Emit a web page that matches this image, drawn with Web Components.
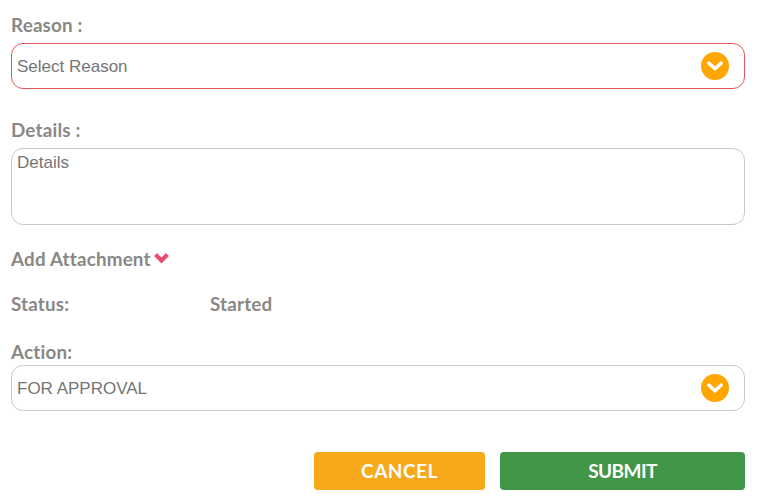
<!DOCTYPE html>
<html><head><meta charset="utf-8">
<style>
html,body{margin:0;padding:0;background:#fff}
body{width:764px;height:502px;overflow:hidden}
</style></head><body>
<request-form></request-form>
<template id="t-label"><style>
:host{display:block;font:700 18.8px/20px Lato,sans-serif;letter-spacing:.2px;color:#8a8884}
</style><slot></slot></template>
<template id="t-select"><style>
:host{display:flex;align-items:center;justify-content:space-between;box-sizing:border-box;height:46px;border:1px solid #c9c9c9;border-radius:12px;padding:1px 15px 0 5px;font:17px "Liberation Sans",Arial,sans-serif;color:#757575;background:#fff}
:host([invalid]){border-color:#e25555}
.c{width:28px;height:28px;flex:none;display:block;margin-top:-2px}
</style><slot></slot><svg class="c" viewBox="0 0 28 28"><circle cx="14" cy="14" r="14" fill="#ffa600"/><path d="M8 11.2 14 16.8l6-5.6" fill="none" stroke="#fff" stroke-width="3.6" stroke-linecap="round" stroke-linejoin="round"/></svg></template>
<template id="t-area"><style>
:host{display:block;box-sizing:border-box;height:77px;border:1px solid #c9c9c9;border-radius:12px;padding:4px 5px;font:17px/19px "Liberation Sans",Arial,sans-serif;color:#757575;background:#fff}
</style><slot></slot></template>
<template id="t-btn"><style>
:host{display:flex;align-items:center;justify-content:center;height:38px;border-radius:4px;font:700 19px/38px Lato,sans-serif;color:#fff;background:var(--bg);letter-spacing:var(--ls,0)}
</style><slot></slot></template>
<template id="t-form"><style>
:host{display:flex;flex-direction:column;box-sizing:border-box;width:764px;height:502px;padding:15px 19px 0 11px}
form-select{margin-top:8px}
.details{margin-top:31px}
form-area{margin-top:8px}
.add{display:flex;align-items:center;gap:2px;margin-top:24px}
.add svg{width:17px;height:12px;display:block;margin-top:-3px}
.status{display:flex;margin-top:25px}
.status form-label:first-child{width:199px}
.action{margin-top:28px}
.action + form-select{margin-top:3px}
.btns{display:flex;justify-content:flex-end;gap:15px;margin-top:41px}
.cancel{width:171px;--bg:#f7a81b;--ls:.5px}
.submit{width:245px;--bg:#429648;--ls:-.6px}
</style>
<form-label>Reason :</form-label>
<form-select invalid>Select Reason</form-select>
<form-label class="details">Details :</form-label>
<form-area>Details</form-area>
<div class="add"><form-label>Add Attachment</form-label><svg viewBox="0 0 17 12"><path d="M2.6 2.6 8.5 8.5l5.9-5.9" fill="none" stroke="#ea4c6d" stroke-width="4.2"/></svg></div>
<div class="status"><form-label>Status:</form-label><form-label>Started</form-label></div>
<form-label class="action">Action:</form-label>
<form-select>FOR APPROVAL</form-select>
<div class="btns"><form-button class="cancel">CANCEL</form-button><form-button class="submit">SUBMIT</form-button></div>
</template>
<script>
function def(n,t){customElements.define(n,class extends HTMLElement{constructor(){super();this.attachShadow({mode:'open'}).appendChild(document.getElementById(t).content.cloneNode(true));}});}
def('form-label','t-label');def('form-select','t-select');def('form-area','t-area');def('form-button','t-btn');def('request-form','t-form');
</script>
</body></html>
